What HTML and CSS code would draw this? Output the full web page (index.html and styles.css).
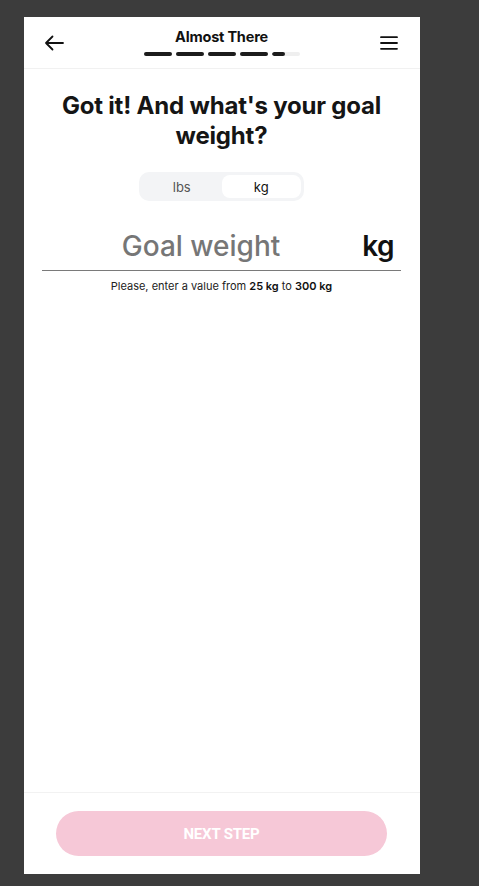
FILE: index.html
```html
<!DOCTYPE html>
<html lang="en">
<head>
<meta charset="utf-8">
<title>Almost There</title>
<link rel="stylesheet" href="styles.css">
</head>
<body>
<div class="panel">
  <header class="topbar">
    <button class="icon-btn" aria-label="Back">
      <svg width="20" height="16" viewBox="0 0 20 16"><path d="M19 8H2M8.5 1.5L2 8l6.5 6.5" fill="none" stroke="#111" stroke-width="1.8" stroke-linecap="round" stroke-linejoin="round"/></svg>
    </button>
    <div class="title-wrap">
      <div class="title">Almost There</div>
      <div class="progress">
        <span class="seg full"></span>
        <span class="seg full"></span>
        <span class="seg full"></span>
        <span class="seg full"></span>
        <span class="seg"><span class="fill"></span></span>
      </div>
    </div>
    <button class="icon-btn" aria-label="Menu">
      <svg width="18" height="14" viewBox="0 0 18 14"><path d="M1 1.2h16M1 7h16M1 12.8h16" fill="none" stroke="#111" stroke-width="1.8" stroke-linecap="round"/></svg>
    </button>
  </header>

  <main class="content">
    <h1 class="question">Got it! And what's your goal weight?</h1>
    <div class="toggle">
      <span class="opt">lbs</span>
      <span class="opt active">kg</span>
    </div>
    <div class="field">
      <span class="placeholder">Goal weight</span>
      <span class="unit">kg</span>
    </div>
    <p class="hint">Please, enter a value from <b>25 kg</b> to <b>300 kg</b></p>
  </main>

  <footer class="footer">
    <button class="next">NEXT STEP</button>
  </footer>
</div>
</body>
</html>
```
FILE: styles.css
```css
* { box-sizing: border-box; }
html, body { margin: 0; padding: 0; }
body {
  background: #3c3c3c;
  font-family: "Inter", "Liberation Sans", sans-serif;
  padding: 17px 0 0 24px;
  height: 886px;
  overflow: hidden;
}
.panel {
  width: 396px;
  height: 857px;
  background: #fff;
  display: flex;
  flex-direction: column;
}
.topbar {
  height: 52px;
  border-bottom: 1px solid #f1f1f1;
  display: flex;
  align-items: flex-start;
  justify-content: space-between;
  padding: 0 20px 0 19px;
}
.icon-btn {
  background: none;
  border: 0;
  padding: 0;
  margin-top: 18px;
  width: 22px;
  height: 16px;
  display: flex;
  align-items: center;
  justify-content: center;
}
.title-wrap {
  display: flex;
  flex-direction: column;
  align-items: center;
  padding-top: 11px;
}
.title {
  font-size: 14.5px;
  font-weight: 700;
  color: #111;
  line-height: 18px;
  letter-spacing: -0.2px;
}
.progress {
  display: flex;
  gap: 4px;
  margin-top: 6px;
}
.seg {
  width: 28px;
  height: 4px;
  border-radius: 2px;
  background: #efefef;
  overflow: hidden;
  display: block;
}
.seg.full { background: #1c1c1c; }
.seg .fill {
  display: block;
  width: 13px;
  height: 4px;
  border-radius: 2px;
  background: #1c1c1c;
}
.content {
  flex: 1;
  display: flex;
  flex-direction: column;
  align-items: center;
  padding: 22px 19px 0 18px;
}
.question {
  margin: 0;
  font-size: 24px;
  font-weight: 700;
  line-height: 30px;
  color: #151515;
  text-align: center;
  letter-spacing: -0.2px;
  padding: 0 16px;
}
.toggle {
  margin-top: 21px;
  width: 165px;
  height: 29px;
  border-radius: 10px;
  background: #f3f4f6;
  display: flex;
  padding: 3px;
  gap: 0;
}
.opt {
  flex: 1;
  display: flex;
  align-items: center;
  justify-content: center;
  font-size: 13px;
  color: #555;
  border-radius: 8px;
}
.opt.active {
  background: #fff;
  color: #111;
}
.field {
  margin-top: 26px;
  width: 100%;
  height: 44px;
  border-bottom: 1px solid #7a7a7a;
  display: flex;
  align-items: center;
  padding-bottom: 6px;
}
.placeholder {
  flex: 1;
  text-align: center;
  font-size: 28px;
  font-weight: 500;
  color: #767676;
  letter-spacing: 0;
  padding-left: 12px;
}
.unit {
  font-size: 28px;
  font-weight: 600;
  color: #111;
  padding-right: 7px;
  padding-left: 14px;
  letter-spacing: -0.5px;
}
.hint {
  margin: 8px 0 0;
  font-size: 11px;
  color: #222;
  text-align: center;
}
.hint b { font-weight: 600; color: #111; }
.footer {
  height: 82px;
  border-top: 1px solid #f2f2f2;
  padding: 18px 33px 0 32px;
}
.next {
  width: 100%;
  height: 45px;
  border: 0;
  border-radius: 23px;
  background: #f6c8d7;
  color: #fff;
  font-family: "Roboto", "Liberation Sans", sans-serif;
  font-weight: 700;
  font-size: 15px;
  letter-spacing: -0.2px;
}
```
